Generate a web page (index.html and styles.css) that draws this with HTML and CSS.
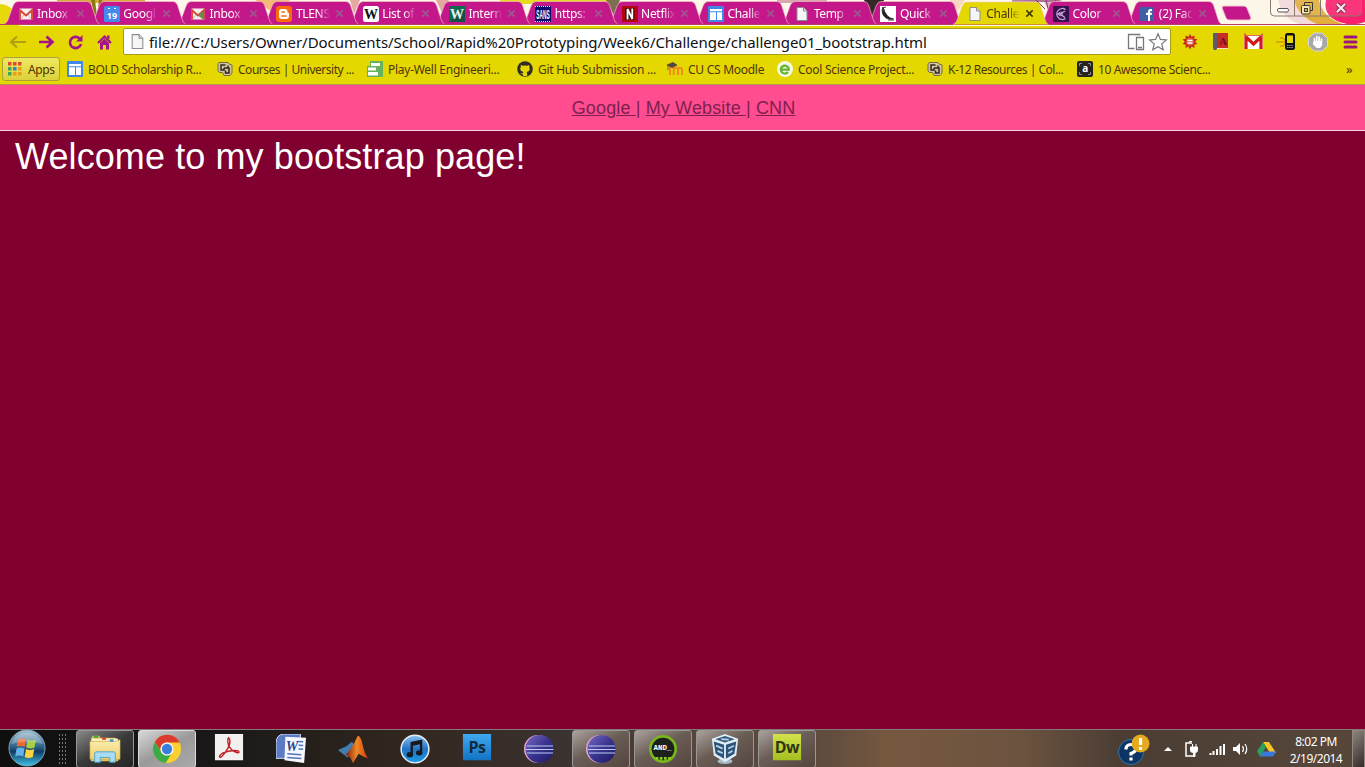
FILE: index.html
```html
<!DOCTYPE html>
<html lang="en">
<head>
<meta charset="utf-8">
<title>Challenge</title>
<link rel="stylesheet" href="styles.css">
</head>
<body>
<svg class="defs" width="0" height="0" aria-hidden="true">
  <defs>
    <linearGradient id="gOrb" x1="0" y1="0" x2="0" y2="1"><stop offset="0" stop-color="#a9c4d4"/><stop offset=".45" stop-color="#2f668c"/><stop offset=".6" stop-color="#123c63"/><stop offset="1" stop-color="#3fc3ea"/></linearGradient>
    <linearGradient id="gNote" x1="0" y1="0" x2="0" y2="1"><stop offset="0" stop-color="#8cc4f2"/><stop offset=".5" stop-color="#2272c4"/><stop offset="1" stop-color="#1a9be8"/></linearGradient>
    <linearGradient id="gPs" x1="0" y1="0" x2="0" y2="1"><stop offset="0" stop-color="#3fa9f0"/><stop offset="1" stop-color="#1273c4"/></linearGradient>
    <linearGradient id="gEcl" x1="0" y1="0" x2="1" y2="1"><stop offset="0" stop-color="#7a6cc0"/><stop offset=".5" stop-color="#3a3490"/><stop offset="1" stop-color="#1c1860"/></linearGradient>
    <linearGradient id="gMat" x1="0" y1="0" x2="1" y2="0"><stop offset="0" stop-color="#7a1a08"/><stop offset=".5" stop-color="#f08a28"/><stop offset="1" stop-color="#d0380c"/></linearGradient>
    <linearGradient id="gDw" x1="0" y1="0" x2="0" y2="1"><stop offset="0" stop-color="#d2e24c"/><stop offset="1" stop-color="#a4bf20"/></linearGradient>
    <linearGradient id="gFold" x1="0" y1="0" x2="0" y2="1"><stop offset="0" stop-color="#fbeeb0"/><stop offset="1" stop-color="#ecd070"/></linearGradient>
    <symbol id="tab" viewBox="0 0 96 24"><path d="M0 24C3 23 4 20 5 17L9 6Q10.500 1.500 14 1.500H83Q86 1.500 87.500 5L92 19Q93 23 95.500 24Z" fill="currentColor"/><path d="M0 24C3 23 4 20 5 17L9 6Q10.500 1.500 14 1.500H83Q86 1.500 87.500 5L92 19Q93 23 95.500 24" fill="none" stroke="#f3c9c4" stroke-opacity=".6"/></symbol>
    <symbol id="gmail" viewBox="0 0 16 16"><rect x="1" y="2.500" width="14" height="11" rx="1" fill="#f6efec"/><path d="M2.500 13L6.500 8.500M13.500 13L9.500 8.500" stroke="#d9b9b4" fill="none"/><path d="M2 13.500V4.200L8 9.500 14 4.200V13.500" fill="none" stroke="#d8453a" stroke-width="1.900"/></symbol>
    <symbol id="page" viewBox="0 0 16 16"><path d="M3 1.500h6.500l3.500 3.500v9.500H3z" fill="#f6f6f6" stroke="#8d8d8d"/><path d="M9.500 1.500V5H13" fill="#ddd" stroke="#8d8d8d"/></symbol>
    <symbol id="sites" viewBox="0 0 16 16"><rect width="16" height="16" rx="1" fill="#4187e8"/><path d="M2 3h12v2.200H2zM2 6.200h6v7.800H2zM9 6.200h5v7.800H9z" fill="#fff"/></symbol>
    <symbol id="cu" viewBox="0 0 16 16"><path d="M2 1.500h9l1 1.500 3 1v8l-2 2.500H7L5.500 11.500H2.500L1 10V3z" fill="#d3c39b" stroke="#6b6046" stroke-width=".9"/><path d="M8.500 4H4v5h3V7M7 7h5v5H8.500V9.500M11 4.500v3" fill="none" stroke="#2d2824" stroke-width="1.500"/></symbol>
    <symbol id="x" viewBox="0 0 10 10"><path d="M1.500 1.500l7 7M8.500 1.500l-7 7" stroke="currentColor" stroke-width="1.700" fill="none"/></symbol>
    <symbol id="eclipse" viewBox="0 0 30 30"><circle cx="14" cy="15" r="14" fill="#e8a8d0"/><circle cx="15.500" cy="15" r="14" fill="url(#gEcl)"/><path d="M3 12h26M2 15.500h27.500M3 19h26" stroke="#b9cdf5" stroke-width="1.200"/></symbol>
  </defs>
</svg>
<div class="screen">
<header class="browser">
  <svg class="theme" width="1365" height="26" viewBox="0 0 1365 26">
    <rect width="1365" height="26" fill="#fdf7ea"/>
    <ellipse cx="0" cy="26" rx="19" ry="22" fill="#e7d80c"/>
    <path d="M57 0h88v3H57z" fill="#d9a93c"/><path d="M91 0h4l2 16 2-16h3l-3 20h-4z" fill="#8c7410"/>
    <path d="M255 0h35l-10 18z" fill="#f7b978"/><path d="M350 0h10l-6 14zM436 0h13l-7 13z" fill="#e5a8a0"/>
    <path d="M500 0h110v4H500z" fill="#e7dc20"/><path d="M606 0h14l-6 16z" fill="#7c7050"/><path d="M777 0h50v3h-50z" fill="#d8a8b0"/>
    <path d="M864 0h20l-9 24z" fill="#332a28"/><path d="M950 0h15l-8 12z" fill="#f8d8c0"/>
    <path d="M1010 0h52l-10 17-8-15z" fill="#ddb0c8"/><path d="M1012 1h48M1036 0l9 9M1046 0l3 12M1056 0l-6 12" stroke="#803060" fill="none"/>
    <path d="M1278 0h17q4 18 26 24h-22q-17-6-21-24z" fill="#f3d9d8"/><path d="M1294 0h25q4 18 24 24h-26q-19-8-23-24z" fill="#dfae3c"/>
    <path d="M1326 0h39v22q-8 3-18 2-25-5-21-24z" fill="#fb1f6d"/>
  </svg>
  <div class="strip">
    <div class="tabs">
      <div class="tab"><svg class="shape"><use href="#tab"/></svg><svg class="ico"><use href="#gmail"/></svg><span class="name">Inbox</span><svg class="close"><use href="#x"/></svg></div>
      <div class="tab"><svg class="shape"><use href="#tab"/></svg><svg class="ico" viewBox="0 0 16 16"><rect width="16" height="16" rx="1.500" fill="#4389ee"/><path d="M4 2.500h2M10 2.500h2" stroke="#fff"/><text x="8" y="13" class="g9">19</text></svg><span class="name">Googl</span><svg class="close"><use href="#x"/></svg></div>
      <div class="tab"><svg class="shape"><use href="#tab"/></svg><svg class="ico" viewBox="0 0 16 16"><use href="#gmail"/><path d="M13 5v8.500l-5-4z" fill="#6a8c4c"/></svg><span class="name">Inbox</span><svg class="close"><use href="#x"/></svg></div>
      <div class="tab"><svg class="shape"><use href="#tab"/></svg><svg class="ico" viewBox="0 0 16 16"><rect width="16" height="16" rx="3" fill="#fb6b0d"/><path d="M5.500 3h3.200a2.800 2.800 0 0 1 2.800 2.800c0 1 .3 1.200 1.500 1.400V10a3 3 0 0 1-3 3H6a3 3 0 0 1-3-3V5.500A2.500 2.500 0 0 1 5.500 3z" fill="#fff"/><path d="M5.800 6h2.700M5.800 10h4.400" stroke="#fb6b0d" stroke-width="1.400" stroke-linecap="round"/></svg><span class="name">TLENS</span><svg class="close"><use href="#x"/></svg></div>
      <div class="tab"><svg class="shape"><use href="#tab"/></svg><svg class="ico" viewBox="0 0 16 16"><rect width="16" height="16" rx="2.500" fill="#fff"/><text x="8" y="13" class="wiki">W</text></svg><span class="name">List of</span><svg class="close"><use href="#x"/></svg></div>
      <div class="tab"><svg class="shape"><use href="#tab"/></svg><svg class="ico" viewBox="0 0 16 16"><rect width="16" height="16" fill="#0c6a50"/><path d="M0 16L16 4v12z" fill="#174f45"/><text x="8" y="12.500" class="wiki pale">W</text></svg><span class="name">Intern</span><svg class="close"><use href="#x"/></svg></div>
      <div class="tab"><svg class="shape"><use href="#tab"/></svg><svg class="ico" viewBox="0 0 16 16"><rect width="16" height="16" fill="#060a72"/><path d="M0 .5h16M0 15.500h16" stroke="#dfe3ff" stroke-dasharray="1 1"/><g transform="translate(8 13) scale(.4 1)"><text class="sans">SANS</text></g></svg><span class="name">https:</span><svg class="close"><use href="#x"/></svg></div>
      <div class="tab"><svg class="shape"><use href="#tab"/></svg><svg class="ico" viewBox="0 0 16 16"><rect width="16" height="16" fill="#b4050f"/><path d="M5 14V2.500l5.500 11V2" fill="none" stroke="#200" stroke-width="3.600"/><path d="M5.500 13.500V3l4.800 10V2.500" fill="none" stroke="#fff" stroke-width="1.900"/></svg><span class="name">Netflix</span><svg class="close"><use href="#x"/></svg></div>
      <div class="tab"><svg class="shape"><use href="#tab"/></svg><svg class="ico"><use href="#sites"/></svg><span class="name">Challe</span><svg class="close"><use href="#x"/></svg></div>
      <div class="tab"><svg class="shape"><use href="#tab"/></svg><svg class="ico"><use href="#page"/></svg><span class="name">Temp</span><svg class="close"><use href="#x"/></svg></div>
      <div class="tab"><svg class="shape"><use href="#tab"/></svg><svg class="ico" viewBox="0 0 16 16"><rect width="16" height="16" fill="#fff"/><path d="M3 1C0 7 5 15 13.500 13Q6 12 3 1z" fill="#222" stroke="#222" stroke-width=".8"/><path d="M2 2l4-1M8 14l6 0M3 5l2-1" stroke="#444"/></svg><span class="name">Quick</span><svg class="close"><use href="#x"/></svg></div>
      <div class="tab active"><svg class="shape"><use href="#tab"/></svg><svg class="ico"><use href="#page"/></svg><span class="name">Challe</span><svg class="close"><use href="#x"/></svg></div>
      <div class="tab"><svg class="shape"><use href="#tab"/></svg><svg class="ico" viewBox="0 0 16 16"><rect width="16" height="16" fill="#38104e"/><path d="M12.500 3.500A5.500 5.500 0 1 0 12.500 12.500M12 5L7 8l5 3.500M7 8H4.500" fill="none" stroke="#cba6d8" stroke-width="1.300"/><circle cx="7.500" cy="8" r="1.800" fill="none" stroke="#cba6d8"/></svg><span class="name">Color</span><svg class="close"><use href="#x"/></svg></div>
      <div class="tab"><svg class="shape"><use href="#tab"/></svg><svg class="ico" viewBox="0 0 16 16"><rect x="1" y="1" width="14" height="14" rx="1" fill="#3f5fa8"/><path d="M9 15V9H7V6.800h2V5.500Q9 3 11.500 3H13v2h-1q-1 0-1 1v.8h2L12.700 9H11v6z" fill="#fff"/></svg><span class="name">(2) Fac</span><svg class="close"><use href="#x"/></svg></div>
    </div>
    <svg class="newtab" width="31" height="16" viewBox="0 0 31 16"><path d="M3 1h20q2 0 3 2l4 10q0 2-2 2H8q-2 0-3-2L1 3q0-2 2-2z" fill="#c4188a" stroke="#f3c0cc"/></svg>
    <svg class="winctl" width="94" height="18" viewBox="0 0 94 18"><path d="M1.500 0v12q0 4 4 4h83q4 0 4-4V0M25.500 0v16M51.500 0v16" fill="#fff" fill-opacity=".1" stroke="#8a7a6c"/><rect x="8.500" y="8.500" width="11" height="3.500" rx="1.500" fill="#fff" stroke="#555"/><path d="M35.500 5.500V2.500h8v8H41" fill="none" stroke="#3d3930"/><rect x="32.500" y="5.500" width="8.500" height="8.500" rx="1" fill="#f4e6b8" stroke="#3d3930"/><rect x="35.500" y="8.500" width="3" height="3" fill="#dfae3c" stroke="#3d3930"/><path d="M68 4l8 8M76 4l-8 8" stroke="#7c3048" stroke-width="4"/><path d="M68 4l8 8M76 4l-8 8" stroke="#fbe6ee" stroke-width="2.200"/></svg>
  </div>
  <div class="toolbar">
    <svg class="nav" width="112" height="20" viewBox="0 0 112 20">
      <path d="M20 10H5M11 4.500L5 10l6 5.500" fill="none" stroke="#b0a017" stroke-width="2.200"/>
      <path d="M33 10H46M40.500 4.500L46.500 10l-6 5.500" fill="none" stroke="#a3148c" stroke-width="2.700"/>
      <path d="M73.500 6.500A5.600 5.600 0 1 0 75 12" fill="none" stroke="#a3148c" stroke-width="2.700"/><path d="M76.500 3v6.500H70z" fill="#a3148c"/>
      <path d="M92 11L98.500 4.500 105 11" fill="none" stroke="#a3148c" stroke-width="2.200"/><path d="M94 11l4.500-4.500L103 11v6.500h-3v-4.500h-3v4.500h-3zM101 3.500h2.500v4l-2.500-2z" fill="#a3148c"/>
    </svg>
    <div class="omnibox"><svg class="pg"><use href="#page"/></svg><span class="url">file:///C:/Users/Owner/Documents/School/Rapid%20Prototyping/Week6/Challenge/challenge01_bootstrap.html</span>
      <svg class="acts" width="42" height="20" viewBox="0 0 42 20"><path d="M13.500 3.500V2.500h-11v14h6M10.500 5.500h7v12h-7zM12 15.500h4" fill="none" stroke="#777" stroke-width="1.300"/><path d="M32 1.800l2.400 5.600 6 .5-4.600 4 1.400 5.900L32 14.700l-5.200 3.100 1.400-5.900-4.600-4 6-.5z" fill="#fff" stroke="#777" stroke-width="1.200"/></svg>
    </div>
    <svg class="exts" width="192" height="24" viewBox="0 0 192 24">
      <path d="M17 4l1.600 2.800 3-1.300-.4 3.200 3.200.6-2.200 2.400 2.200 2.400-3.200.6.400 3.200-3-1.300L17 19.400l-1.600-2.800-3 1.300.4-3.200-3.200-.6 2.200-2.400-2.200-2.400 3.200-.6-.4-3.200 3 1.300z" fill="#c8281c"/><circle cx="17" cy="11.700" r="4" fill="#dd5a46"/><path d="M14.500 10.500h5M14.500 13h5" stroke="#fff" stroke-width="1.400"/>
      <path d="M41 3h14v16H41z" fill="#c92c28"/><path d="M40 3h4.500v15L43 20h-2l-1-2z" fill="#5a5a68"/><path d="M44 18.500h11" stroke="#f5dfd0"/><text x="50" y="15" class="dict">A</text>
      <rect x="71" y="5" width="19" height="14" rx="1.500" fill="#fff"/><path d="M73 19V7l7.500 7L88 7v12" fill="none" stroke="#d31a1a" stroke-width="3.200"/><path d="M71 5.500h19" stroke="#df6a60"/>
      <path d="M103 12h10M107 8h3l3.500 4-3.500 4h-3" fill="none" stroke="#d29e00" stroke-width="1.300"/><rect x="112" y="3" width="10" height="17" rx="2.500" fill="#111"/><path d="M114 5.500h6v7.500h-6z" fill="#e5d800"/><path d="M114 15.500h6M114 17.500h6" stroke="#999" stroke-dasharray="1.500 .7"/>
      <path d="M141 3h8l5.500 5.500v7.500L149 21h-8l-5.500-5V8.500z" fill="#a8a8a8" stroke="#d9d9d9"/><path d="M141.500 12V8.500m2.300 3V6.500m2.300 5V7m2.300 5V9" stroke="#fff" stroke-width="1.600" stroke-linecap="round"/><path d="M140.700 11h8.500v4l-2 3h-3.500l-4-4z" fill="#fff"/>
      <path d="M172 7h11M172 12h11M172 17h11" stroke="#9b1878" stroke-width="3" stroke-linecap="round"/>
    </svg>
  </div>
  <nav class="bookmarks">
    <div class="apps"><svg width="14" height="14" viewBox="0 0 14 14"><path d="M0 0h3.500v3.500H0zM5 0h3.500v3.500H5zM10 0h3.500v3.500H10z" fill="#df4930"/><path d="M0 5h3.500v3.500H0z" fill="#42a45c"/><path d="M5 5h3.500v3.500H5z" fill="#2d83cf"/><path d="M10 5h3.500v3.500H10zM5 10h3.500v3.500H5zM10 10h3.500v3.500H10z" fill="#eb9d16"/><path d="M0 10h3.500v3.500H0z" fill="#42a45c"/></svg><span>Apps</span></div>
    <a class="bm"><svg class="ico"><use href="#sites"/></svg><span>BOLD Scholarship R...</span></a>
    <a class="bm tight"><svg class="ico"><use href="#cu"/></svg><span>Courses | University ...</span></a>
    <a class="bm loose"><svg class="ico" viewBox="0 0 16 16"><path d="M3 0h13v16H0V5h3z" fill="#66b35c"/><path d="M4 2h9v3H4zM1 6.500h8v3H1zM1 11h10v3.500H1z" fill="#fff"/></svg><span>Play-Well Engineeri...</span></a>
    <a class="bm loose"><svg class="ico" viewBox="0 0 16 16"><circle cx="8" cy="8" r="7.800" fill="#302d26"/><path d="M4 4l2 .8q2-.5 4 0L12 4q.6 1 .3 2.300 1 1.700 0 3.300-.8 1.200-2.600 1.500.5.600.4 1.400V15H6v-1.800Q4 13.500 3.300 12q1.500.8 2.700 0 0-.6.400-1-3-.5-3.200-2.800-.1-1 .6-1.900Q3.500 5 4 4z" fill="#e2d500"/></svg><span>Git Hub Submission ...</span></a>
    <a class="bm short loose"><svg class="ico" viewBox="0 0 16 16"><path d="M3 14V6.500q2-2 3.700 0V14M7 8q1.800-3 4 0v6M11 8q2-2.500 4 0v6" fill="none" stroke="#f08b19" stroke-width="2"/><path d="M0 4l6-2.500L10 4 5 6.500zM1 4v5" fill="#54483c" stroke="#54483c" stroke-width=".8"/></svg><span>CU CS Moodle</span></a>
    <a class="bm loose"><svg class="ico" viewBox="0 0 16 16"><circle cx="8" cy="8" r="8" fill="#f5f8e6"/><path d="M4.500 8.600h7.300A4 4 0 1 0 11 11" fill="none" stroke="#65b62e" stroke-width="2.300"/></svg><span>Cool Science Project...</span></a>
    <a class="bm tight"><svg class="ico"><use href="#cu"/></svg><span>K-12 Resources | Col...</span></a>
    <a class="bm"><svg class="ico" viewBox="0 0 16 16"><rect width="16" height="16" rx="2" fill="#27241f"/><path d="M2.500 5V2.500H5M11 2.500h2.500V5M13.500 11v2.500H11M5 13.500H2.500V11" fill="none" stroke="#888"/><text x="8" y="11" class="aa">a</text></svg><span>10 Awesome Scienc...</span></a>
    <span class="more">»</span>
  </nav>
</header>
<main class="page">
  <div class="links"><a>Google </a>| <a>My Website </a>| <a>CNN</a></div>
  <h1>Welcome to my bootstrap page!</h1>
</main>
<footer class="taskbar">
  <svg class="orb" width="38" height="38" viewBox="0 0 38 38"><circle cx="19" cy="19" r="18" fill="url(#gOrb)" stroke="#7da6bb"/><path d="M10 11q4-3 8-1l-1.300 8q-4-2-8 0z" fill="#ef6a33"/><path d="M19.500 10.500q4 2.500 8.500 0l-1.500 8q-4 2-8.300 0z" fill="#a6cf47"/><path d="M8.500 19.500q4-2 8 0l-1.300 8q-4-2-8 0z" fill="#63b2ea"/><path d="M18 20q4 2 8.300 0l-1.500 8q-4 2-8.200 0z" fill="#fbd33e"/><path d="M3 15A17 17 0 0 1 35 15Q19 10 3 15z" fill="#fff" opacity=".24"/></svg>
  <div class="grip"></div>
  <div class="apps-row">
    <div class="task open"><svg viewBox="0 0 38 34"><path d="M4 6l2-3h7l1 2h16l3 3v22H4z" fill="#e2c15c"/><path d="M5 6h28v22H5z" fill="#f8efbd"/><path d="M3 9h28l4-2v21H3z" fill="url(#gFold)" stroke="#c9a83f" stroke-width=".6"/><path d="M7 4h5" stroke="#48a641" stroke-width="2.500"/><path d="M16 6h4" stroke="#d84330" stroke-width="2.500"/><path d="M24 8h4" stroke="#3a8fd0" stroke-width="2.500"/><path d="M8 31v-9q0-2 2-2h18q2 0 2 2v9h-6v-5H14v5z" fill="#a8dcf2" stroke="#4ca4cb"/></svg></div>
    <div class="task open current"><svg viewBox="0 0 32 32"><circle cx="16" cy="16" r="15" fill="#fbd02f"/><path d="M3 8.500A15 15 0 0 1 29.500 9H16a7 7 0 0 0-6.300 10z" fill="#dc3a2e"/><path d="M3 8.500A15 15 0 0 0 14.500 31L21 20.500A7 7 0 0 1 9.700 19z" fill="#3daa48"/><circle cx="16" cy="16" r="7" fill="#eef4fb"/><circle cx="16" cy="16" r="5.500" fill="#3a7edb"/></svg></div>
    <div class="task"><svg viewBox="0 0 32 32"><rect x="1" y="0" width="30" height="28" fill="#f3f1ef"/><path d="M15.500 4q2.500 2 .8 8Q13 20 7 25q-3-1 2-4.500 9-4 17-2.500 2 2-1 2-7-2-9.500-8-1.500-6 0-8z" fill="none" stroke="#c11f26" stroke-width="1.500"/></svg></div>
    <div class="task"><svg viewBox="0 0 32 32"><path d="M0 26V10q0-9 8-10h18v26z" fill="#5b7bc4" stroke="#dbe5f6"/><path d="M10 3l22 1-2 27-21-3z" fill="#f5f8ff"/><text x="17" y="18" class="word">W</text><path d="M24 8l5 .3M24 12l5 .3M24 16l5 .3M12 21l15 1.200M12 25l15 1.200" stroke="#5273b8" stroke-width="1.500"/></svg></div>
    <div class="task"><svg viewBox="0 0 32 32"><path d="M0 17l9-4 6-5 3 5-8 12z" fill="#417db0"/><path d="M8 22q7-7 13-20 3-1 6 12 1 6 5 12l-5-2-5-3-6 10-3-6z" fill="url(#gMat)"/></svg></div>
    <div class="task"><svg viewBox="0 0 32 32"><circle cx="16" cy="16" r="14.800" fill="url(#gNote)" stroke="#e5edf5" stroke-width="1.600"/><path d="M12.500 21V9.500l10-2V19M12.500 11.500l10-2" fill="none" stroke="#17191e" stroke-width="2.500"/><ellipse cx="10.500" cy="22" rx="3.500" ry="2.800" fill="#17191e"/><ellipse cx="20.500" cy="20" rx="3.500" ry="2.800" fill="#17191e"/></svg></div>
    <div class="task"><svg viewBox="0 0 32 32"><rect x="1" y="0" width="30" height="28" fill="url(#gPs)"/><text x="16" y="20" class="adobe">Ps</text></svg></div>
    <div class="task"><svg><use href="#eclipse"/></svg></div>
    <div class="task open dim"><svg><use href="#eclipse"/></svg></div>
    <div class="task open dim"><svg viewBox="0 0 32 32"><circle cx="16" cy="16" r="13.500" fill="#1c211b" stroke="#79b51d" stroke-width="2.800"/><text x="15.500" y="17" class="and">AND_</text><path d="M8 26h17" stroke="#8acb22" stroke-width="3" stroke-dasharray="3 1.500"/></svg></div>
    <div class="task open dim"><svg viewBox="0 0 32 32"><ellipse cx="16" cy="29" rx="8" ry="3" fill="#a5b9c7"/><path d="M2 5l14-5 14 5-2 18-12 7-12-7z" fill="#e0edf4"/><path d="M5.500 5.500L16 2l10.500 3.500L16 9z" fill="#315c7e"/><path d="M4 8l11 3.500v15L6 21zM28 8l-11 3.500v15l9-5.500z" fill="#2c5379"/><path d="M6.500 12.500l7 3M8 18l5.500 2.500M25.500 12.500l-6 3M24 18l-4.500 2.500M12 5.500l8 .5" stroke="#b7d0df" stroke-width="2"/></svg></div>
    <div class="task open dim"><svg viewBox="0 0 32 32"><rect x="1" y="0" width="30" height="28" fill="url(#gDw)"/><text x="16" y="20" class="adobe olive">Dw</text></svg></div>
  </div>
  <svg class="tray" width="168" height="38" viewBox="0 0 168 38">
    <circle cx="15" cy="22" r="12.500" fill="#0c3563" stroke="#2c75b0"/><path d="M10 19.500q0-5 5-5t5 4q0 3-5 5v2M15 27.500v3" fill="none" stroke="#fff" stroke-width="3.200"/><circle cx="24.500" cy="13.500" r="9" fill="#e5aa1d"/><path d="M24.500 8v7M24.500 17v3" stroke="#fff" stroke-width="3.200"/>
    <path d="M48 21l4-4 4 4z" fill="#fff"/>
    <path d="M76 13h-6v13h9" fill="none" stroke="#fff" stroke-width="1.500"/><path d="M73 11.500h3M74.500 17h7v3.500q0 2-2.500 2v4h-1.500v-4q-3 0-3-2zM76.500 14v3M80 14v3" fill="#fff" stroke="#fff"/>
    <path d="M94.500 23v2M97.500 21v4M101 19v6M104.500 16v9M108 14v11" stroke="#fff" stroke-width="2"/>
    <path d="M117 17h3l4-4v12l-4-4h-3z" fill="#fff"/><path d="M126.500 16q2 3 0 6M129 14q3.500 5 0 10" fill="none" stroke="#fff" stroke-width="1.200"/>
    <path d="M147 12h6l7 11h-6z" fill="#f9c725"/><path d="M147 12l3 5-6 9.500-3-5z" fill="#28a15a"/><path d="M147 21.500h13L157 26.500h-13z" fill="#3a78dc"/>
  </svg>
  <div class="clock"><span>8:02 PM</span><span>2/19/2014</span></div>
  <div class="peek"></div>
</footer>
</div>
</body>
</html>
```
FILE: styles.css
```css
* { box-sizing: border-box; }
body { margin: 0; overflow: hidden; font-family: "Noto Sans", "Open Sans", sans-serif; }
.defs { position: absolute; }
.screen { display: flex; flex-direction: column; width: 1365px; height: 767px; overflow: hidden; background: #80002f; }
.browser { position: relative; height: 85px; flex: none; background: #e5d800; border-bottom: 1px solid #b99450; }
.theme { position: absolute; left: 0; top: 0; }

.strip { position: relative; display: flex; align-items: flex-start; height: 25px; padding-left: 4px; border-bottom: 1px solid #b7405c; }
.tabs { display: flex; height: 25px; width: 1217px; flex: none; }
.tab { position: relative; display: flex; align-items: center; width: 86.3px; flex: none; padding: 2px 0 0 13.5px; color: #c4188a; }
.tab:nth-child(1) { z-index: 14; }
.tab:nth-child(2) { z-index: 13; }
.tab:nth-child(3) { z-index: 12; }
.tab:nth-child(4) { z-index: 11; }
.tab:nth-child(5) { z-index: 10; }
.tab:nth-child(6) { z-index: 9; }
.tab:nth-child(7) { z-index: 8; }
.tab:nth-child(8) { z-index: 7; }
.tab:nth-child(9) { z-index: 6; }
.tab:nth-child(10) { z-index: 5; }
.tab:nth-child(11) { z-index: 4; }
.tab:nth-child(13) { z-index: 2; }
.tab.active { z-index: 20; color: #e5d800; }
.shape { position: absolute; left: 0; top: 0; width: 96px; height: 24px; }
.active .shape { height: 25px; }
.tab .ico { position: relative; }
.ico { width: 16px; height: 16px; flex: none; }
.name { position: relative; width: 34px; margin-left: 3.5px; overflow: hidden; white-space: nowrap; font-size: 12px; line-height: 18px; letter-spacing: -0.3px; color: #fff; -webkit-mask-image: linear-gradient(90deg, #000 65%, transparent); mask-image: linear-gradient(90deg, #000 65%, transparent); }
.active .name { color: #4a3405; }
.close { position: relative; width: 9px; height: 9px; margin-left: 5px; color: #9a5a90; }
.active .close { color: #40370c; }
.newtab { margin-top: 5px; flex: none; }
.winctl { margin-left: 17px; flex: none; }

.toolbar { position: relative; display: flex; align-items: center; height: 35px; padding-left: 6px; margin-top: -1px; }
.nav { flex: none; margin-right: 5px; }
.omnibox { display: flex; align-items: center; width: 1048px; height: 27px; padding-left: 5px; background: #fff; border: 1px solid #a79d12; border-radius: 2px; flex: none; }
.pg { width: 17px; height: 17px; flex: none; }
.url { margin-left: 3px; width: 972px; white-space: nowrap; font-size: 15px; line-height: 22px; letter-spacing: -0.05px; color: #111; }
.acts { margin-left: 5px; flex: none; }
.exts { flex: none; margin-left: 2px; }

.bookmarks { display: flex; align-items: center; height: 22px; margin-top: -1px; padding: 0 0 0 2px; font-size: 12px; letter-spacing: -0.37px; color: #4e3604; white-space: nowrap; }
.apps { display: flex; align-items: center; gap: 6px; width: 58px; height: 24px; padding-left: 5px; margin: 0 7px 0 0; border: 1px solid #aaa03c; border-radius: 3px; background: linear-gradient(#f0e860, #dcd13c); flex: none; }
.bm { display: flex; align-items: center; gap: 5px; width: 150px; flex: none; }
.bm.short { width: 110px; }
.tight { letter-spacing: -0.48px; }
.loose { letter-spacing: -0.27px; }
.more { margin-left: 119px; font-size: 13px; }

.page { flex: 1; color: #fff; font-family: "Liberation Sans", Arial, sans-serif; }
.links { height: 46px; padding: 12px 0 0 2px; background: #ff4d90; border-bottom: 1px solid #f3d3df; color: #80204f; font-size: 18px; line-height: 22px; letter-spacing: 0.14px; text-align: center; white-space: pre; }
.links a { text-decoration: underline; }
h1 { margin: 6px 0 0 15px; font-size: 36px; line-height: 40px; font-weight: 400; letter-spacing: 0.1px; }

.taskbar { display: flex; flex: none; height: 38px; border-top: 1px solid #86767a; background: linear-gradient(90deg, #100f10 0, #1b1918 230px, #33281f 420px, #3a3230 560px, #57463b 700px, #5a4a3e 810px, #76583f 890px, #6c5340 1020px, #4b3d33 1120px, #57473b 1365px); }
.orb { margin: -1px 0 0 8px; flex: none; }
.grip { width: 8px; height: 32px; margin: 3px 14px 0 12px; background: radial-gradient(circle, #777 0.7px, transparent 1px) 0 0 / 3px 4px; flex: none; }
.apps-row { display: flex; gap: 4px; width: 1034px; flex: none; margin-left: -4px; }
.task { display: flex; justify-content: center; align-items: center; width: 58px; height: 38px; border: 1px solid transparent; border-radius: 3px; flex: none; }
.task svg { width: 30px; height: 30px; }
.task:first-child svg { width: 36px; height: 32px; }
.open { border-color: #9a9896; background: linear-gradient(150deg, #8a8a8a, #383838 50%, #262626); }
.dim { background: linear-gradient(150deg, #aaa29c, #6a5d55 45%, #54463e); }
.current { border-color: #ddd; background: linear-gradient(150deg, #d8d8d8, #9a9a9a 50%, #aaa); }
.tray { flex: none; margin-left: 6px; }
.clock { display: flex; flex-direction: column; align-items: center; width: 64px; padding-top: 3px; font-size: 12px; line-height: 17px; letter-spacing: -0.5px; color: #fff; flex: none; }
.peek { width: 13px; height: 38px; margin-left: auto; border: 1px solid #92877f; background: linear-gradient(135deg, #8b8580, #332b27); flex: none; }

text { text-anchor: middle; }
.g9 { font: 700 9px "Noto Sans", sans-serif; fill: #fff; }
.wiki { font: 700 14px "Liberation Serif", serif; fill: #111; }
.pale { fill: #e4f3ee; }
.sans { font: 700 12px "Liberation Sans", sans-serif; fill: #fff; }
.dict { font: 700 11px "Liberation Serif", serif; fill: #6f1216; }
.aa { font: 700 10px "Open Sans", sans-serif; fill: #fff; }
.word { font: italic 700 15px "Liberation Serif", serif; fill: #27478f; }
.adobe { font: 700 17px "Open Sans", sans-serif; fill: #102a3c; letter-spacing: -0.5px; }
.olive { fill: #2f3610; }
.and { font: 700 8px "Liberation Mono", monospace; fill: #fff; }
```
